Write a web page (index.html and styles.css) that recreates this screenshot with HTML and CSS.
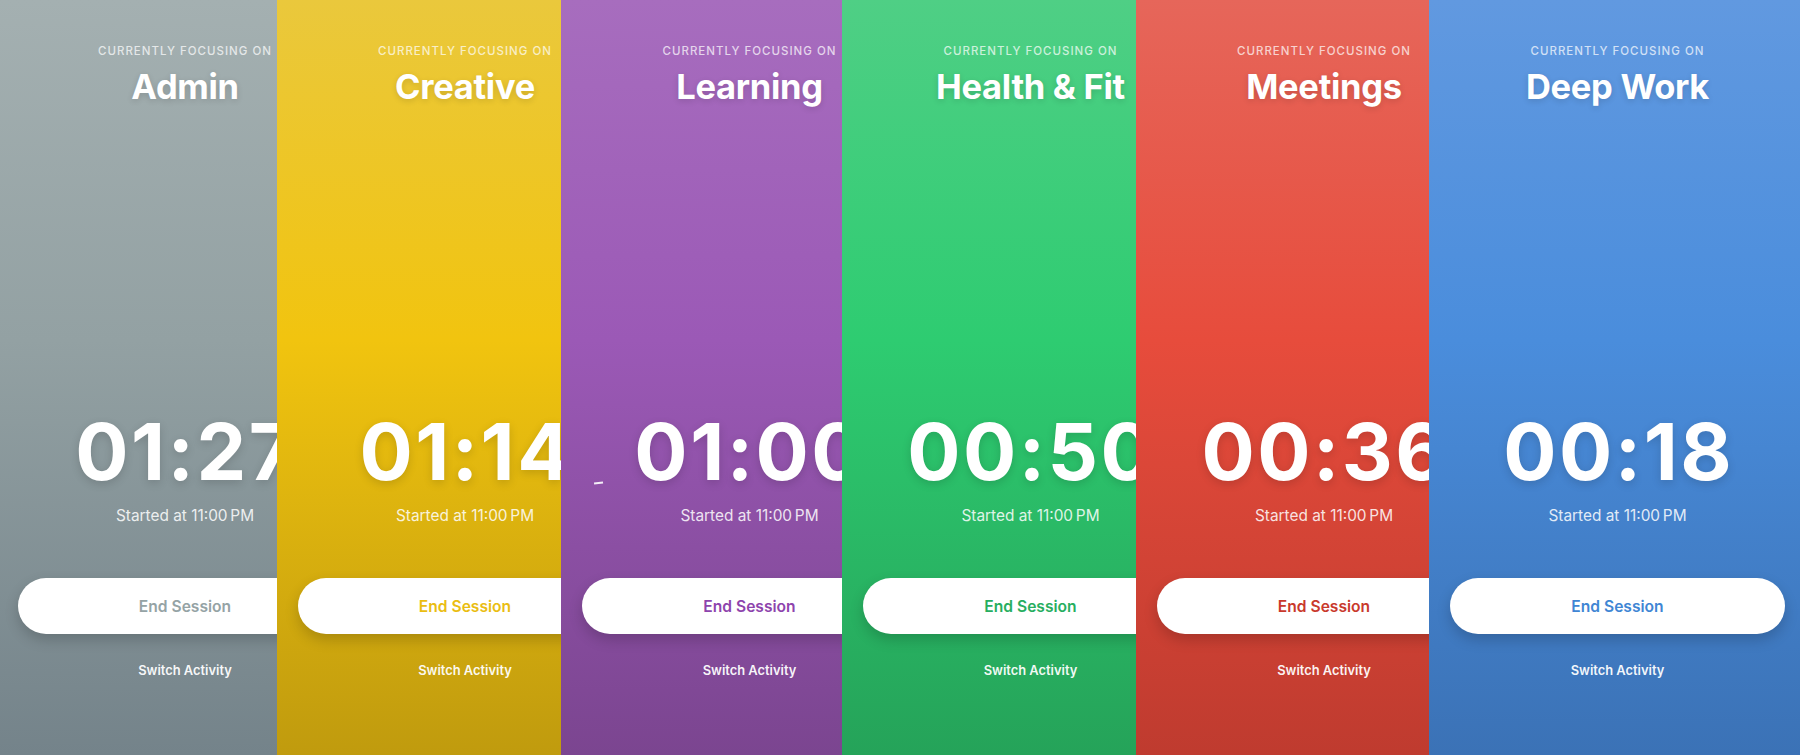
FILE: index.html
```html
<!DOCTYPE html>
<html lang="en">
<head>
<meta charset="utf-8">
<title>Focus Sessions</title>
<link rel="stylesheet" href="styles.css">
</head>
<body>
<main class="strip">
  <section class="slot slot-admin">
    <div class="phone theme-admin">
      <p class="caption">CURRENTLY FOCUSING ON</p>
      <h1 class="title">Admin</h1>
      <div class="timer">01:27</div>
      <p class="started">Started at 11:00&#8201;PM</p>
      <button class="end">End Session</button>
      <a class="switch">Switch Activity</a>
    </div>
  </section>
  <section class="slot slot-creative">
    <div class="phone theme-creative">
      <p class="caption">CURRENTLY FOCUSING ON</p>
      <h1 class="title">Creative</h1>
      <div class="timer">01:14</div>
      <p class="started">Started at 11:00&#8201;PM</p>
      <button class="end">End Session</button>
      <a class="switch">Switch Activity</a>
    </div>
  </section>
  <section class="slot slot-learning">
    <div class="phone theme-learning">
      <span class="glitch"></span>
      <p class="caption">CURRENTLY FOCUSING ON</p>
      <h1 class="title">Learning</h1>
      <div class="timer">01:00</div>
      <p class="started">Started at 11:00&#8201;PM</p>
      <button class="end">End Session</button>
      <a class="switch">Switch Activity</a>
    </div>
  </section>
  <section class="slot slot-health">
    <div class="phone theme-health">
      <p class="caption">CURRENTLY FOCUSING ON</p>
      <h1 class="title">Health &amp; Fit</h1>
      <div class="timer">00:50</div>
      <p class="started">Started at 11:00&#8201;PM</p>
      <button class="end">End Session</button>
      <a class="switch">Switch Activity</a>
    </div>
  </section>
  <section class="slot slot-meetings">
    <div class="phone theme-meetings">
      <p class="caption">CURRENTLY FOCUSING ON</p>
      <h1 class="title">Meetings</h1>
      <div class="timer">00:36</div>
      <p class="started">Started at 11:00&#8201;PM</p>
      <button class="end">End Session</button>
      <a class="switch">Switch Activity</a>
    </div>
  </section>
  <section class="slot slot-deep">
    <div class="phone theme-deep">
      <p class="caption">CURRENTLY FOCUSING ON</p>
      <h1 class="title">Deep Work</h1>
      <div class="timer">00:18</div>
      <p class="started">Started at 11:00&#8201;PM</p>
      <button class="end">End Session</button>
      <a class="switch">Switch Activity</a>
    </div>
  </section>
</main>
</body>
</html>
```
FILE: styles.css
```css
* { box-sizing: border-box; }
html, body {
  margin: 0;
  padding: 0;
  width: 1800px;
  height: 755px;
  overflow: hidden;
  background: #4a90e2;
}
body {
  font-family: Inter, "Noto Sans", "Liberation Sans", sans-serif;
  color: #fff;
}
.strip {
  display: flex;
  height: 755px;
  margin-left: -3.5px;
}
.slot {
  flex: none;
  height: 755px;
  overflow: hidden;
}
.slot-admin { width: 280px; }
.slot-creative { width: 284.5px; }
.slot-learning { width: 281px; }
.slot-health { width: 293.5px; }
.slot-meetings { width: 293.5px; }
.slot-deep { width: 377px; }

.phone {
  position: relative;
  width: 377px;
  height: 755px;
  display: flex;
  flex-direction: column;
  align-items: center;
  padding-top: 44px;
}
.caption {
  margin: 0;
  font-size: 11.5px;
  line-height: 14px;
  font-weight: 500;
  letter-spacing: 1px;
  color: rgba(255,255,255,0.72);
}
.title {
  margin: 7.7px 0 0;
  font-size: 34.5px;
  line-height: 42px;
  font-weight: 700;
  letter-spacing: -0.3px;
  text-shadow: 0 2px 6px rgba(0,0,0,0.14);
}
.timer {
  margin-top: 298.5px;
  font-size: 79px;
  line-height: 90px;
  font-weight: 700;
  white-space: nowrap;
  letter-spacing: 2.5px;
  text-indent: 2.5px;
  text-shadow: 0 3px 10px rgba(0,0,0,0.15);
}
.started {
  margin: 11.1px 0 0;
  font-size: 15.4px;
  line-height: 18px;
  font-weight: 400;
  color: rgba(255,255,255,0.86);
}
.end {
  margin-top: 53px;
  width: 335px;
  height: 56px;
  border: 0;
  border-radius: 28px;
  background: #fff;
  font-family: inherit;
  font-size: 15.6px;
  font-weight: 600;
  box-shadow: 0 6px 14px rgba(0,0,0,0.18);
}
.switch {
  margin-top: 29px;
  font-size: 12.9px;
  line-height: 16px;
  font-weight: 600;
  color: rgba(255,255,255,0.95);
}
.glitch {
  position: absolute;
  left: 33px;
  top: 482px;
  width: 9px;
  height: 1.5px;
  background: rgba(255,255,255,0.9);
  transform: rotate(-6deg);
}

.theme-admin { background: linear-gradient(#a4b0b1, #93a1a3 45%, #74838a); }
.theme-admin .end { color: #95a3a5; }
.theme-creative { background: linear-gradient(#eac83c, #f1c40f 45%, #c09b0e); }
.theme-creative .end { color: #eabd12; }
.theme-learning { background: linear-gradient(#a76dbe, #9b59b6 45%, #7b4590); }
.theme-learning .end { color: #8e44ad; }
.theme-health { background: linear-gradient(#4fcf85, #2ecc71 45%, #25a359); }
.theme-health .end { color: #27ae60; }
.theme-meetings { background: linear-gradient(#e6665a, #e74c3c 45%, #bf3b2f); }
.theme-meetings .end { color: #c9392c; }
.theme-deep { background: linear-gradient(#6199e0, #4a8ddc 45%, #3b72b6); }
.theme-deep .end { color: #3f86d4; }
```
